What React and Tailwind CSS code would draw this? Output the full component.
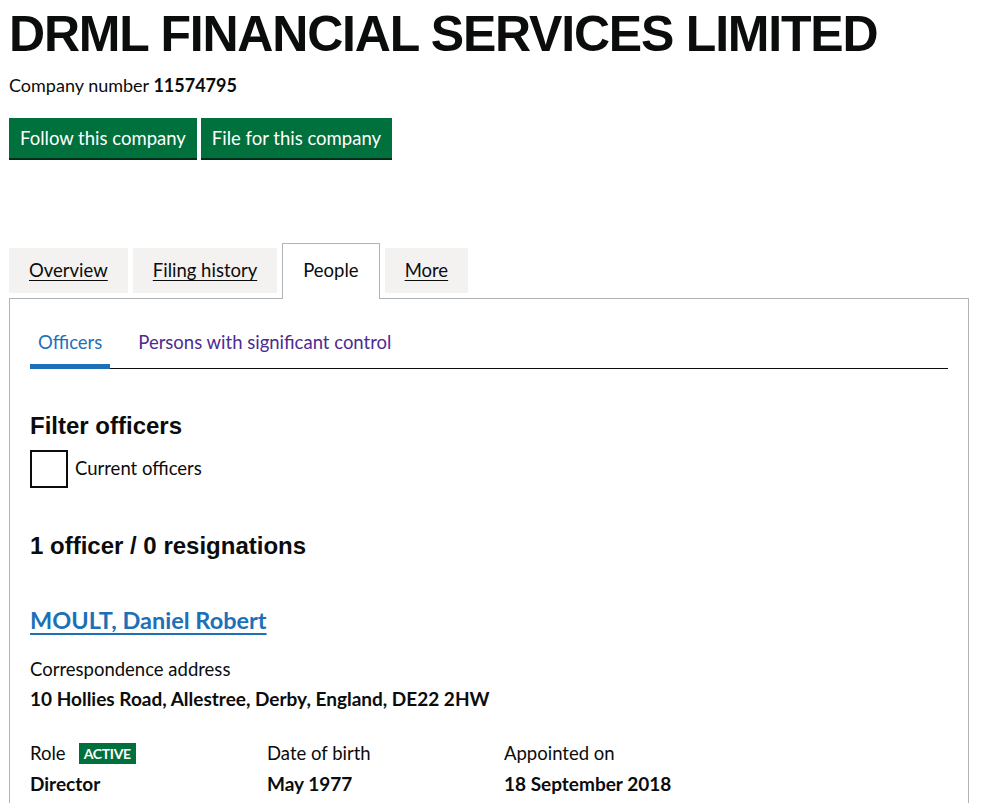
import React from 'react';

const body = { fontFamily: 'Lato, "Liberation Sans", Arial, sans-serif' };
const arial = { fontFamily: '"Liberation Sans", Arial, sans-serif' };

const Tab = ({ children }) => (
    <a href="#" className="mb-[5px] block bg-[#f3f2f1] px-5 pt-[10px] pb-[10px] text-[18.5px] leading-[25px] text-[#0b0c0c] underline underline-offset-[3px]">
        {children}
    </a>
);

const Field = ({ label, value }) => (
    <div>
        <div className="text-[18.5px] leading-[25px]">{label}</div>
        <div className="mt-[5px] text-[19px] leading-[25px] font-bold">{value}</div>
    </div>
);

const App = () => {
    return (
        <div className="min-h-screen bg-white text-[#0b0c0c]" style={body}>
            <div className="pl-[9px] pr-[18px]">
                <h1 className="pt-[6px] text-[50px] leading-[56px] font-bold tracking-[-1.2px]" style={arial}>
                    DRML FINANCIAL SERVICES LIMITED
                </h1>
                <p className="mt-[11px] text-[18px] leading-[25px]">
                    Company number <strong className="font-bold">11574795</strong>
                </p>
                <div className="mt-[20px] flex gap-1">
                    <button className="h-[40px] bg-[#00703c] px-[11px] text-[18.5px] leading-[25px] text-white shadow-[0_2px_0_#002d18]">
                        Follow this company
                    </button>
                    <button className="h-[40px] bg-[#00703c] px-[11px] text-[18.5px] leading-[25px] text-white shadow-[0_2px_0_#002d18]">
                        File for this company
                    </button>
                </div>

                <div className="mt-[85px] w-[960px]">
                    <div className="flex items-end gap-[5px]">
                        <Tab>Overview</Tab>
                        <Tab>Filing history</Tab>
                        <div className="relative z-10 -mb-px border border-b-0 border-[#b1b4b6] bg-white px-5 pt-[14px] pb-[16px] text-[18.5px] leading-[25px]">
                            People
                        </div>
                        <Tab>More</Tab>
                    </div>
                    <div className="border border-[#b1b4b6] px-5 pt-[31px] pb-10">
                        <div className="flex border-b border-[#0b0c0c]">
                            <span className="-mb-px border-b-[5px] border-[#1d70b8] px-2 pb-[9px] text-[18.5px] leading-[25px] text-[#1d70b8]">Officers</span>
                            <span className="ml-5 px-2 pb-[9px] text-[18.5px] leading-[25px] text-[#4c2c92]">Persons with significant control</span>
                        </div>

                        <h2 className="mt-[42px] text-[24px] leading-[30px] font-bold" style={arial}>
                            Filter officers
                        </h2>
                        <label className="mt-[9px] flex items-center gap-[7px]">
                            <span className="block h-[38px] w-[38px] border-2 border-[#0b0c0c]"></span>
                            <span className="-mt-[2px] text-[18.5px] leading-[25px]">Current officers</span>
                        </label>

                        <h2 className="mt-[43px] text-[24px] leading-[30px] font-bold" style={arial}>
                            1 officer / 0 resignations
                        </h2>

                        <a href="#" className="mt-[44px] block w-fit text-[23.5px] leading-[30px] font-bold text-[#1d70b8] underline decoration-2 underline-offset-[4px]">
                            MOULT, Daniel Robert
                        </a>

                        <div className="mt-[22px] text-[18.5px] leading-[25px]">Correspondence address</div>
                        <div className="mt-[4px] text-[19px] leading-[25px] font-bold">10 Hollies Road, Allestree, Derby, England, DE22 2HW</div>

                        <div className="mt-[30px] grid grid-cols-[237px_237px_237px]">
                            <div>
                                <div className="flex items-center text-[18.5px] leading-[25px]">
                                    Role
                                    <span className="ml-[13px] bg-[#00703c] px-[5px] text-[14px] leading-[21px] font-bold tracking-[-0.3px] text-white">ACTIVE</span>
                                </div>
                                <div className="mt-[5px] text-[19px] leading-[25px] font-bold">Director</div>
                            </div>
                            <Field label="Date of birth" value="May 1977" />
                            <Field label="Appointed on" value="18 September 2018" />
                        </div>
                    </div>
                </div>
            </div>
        </div>
    );
};

export default App;
